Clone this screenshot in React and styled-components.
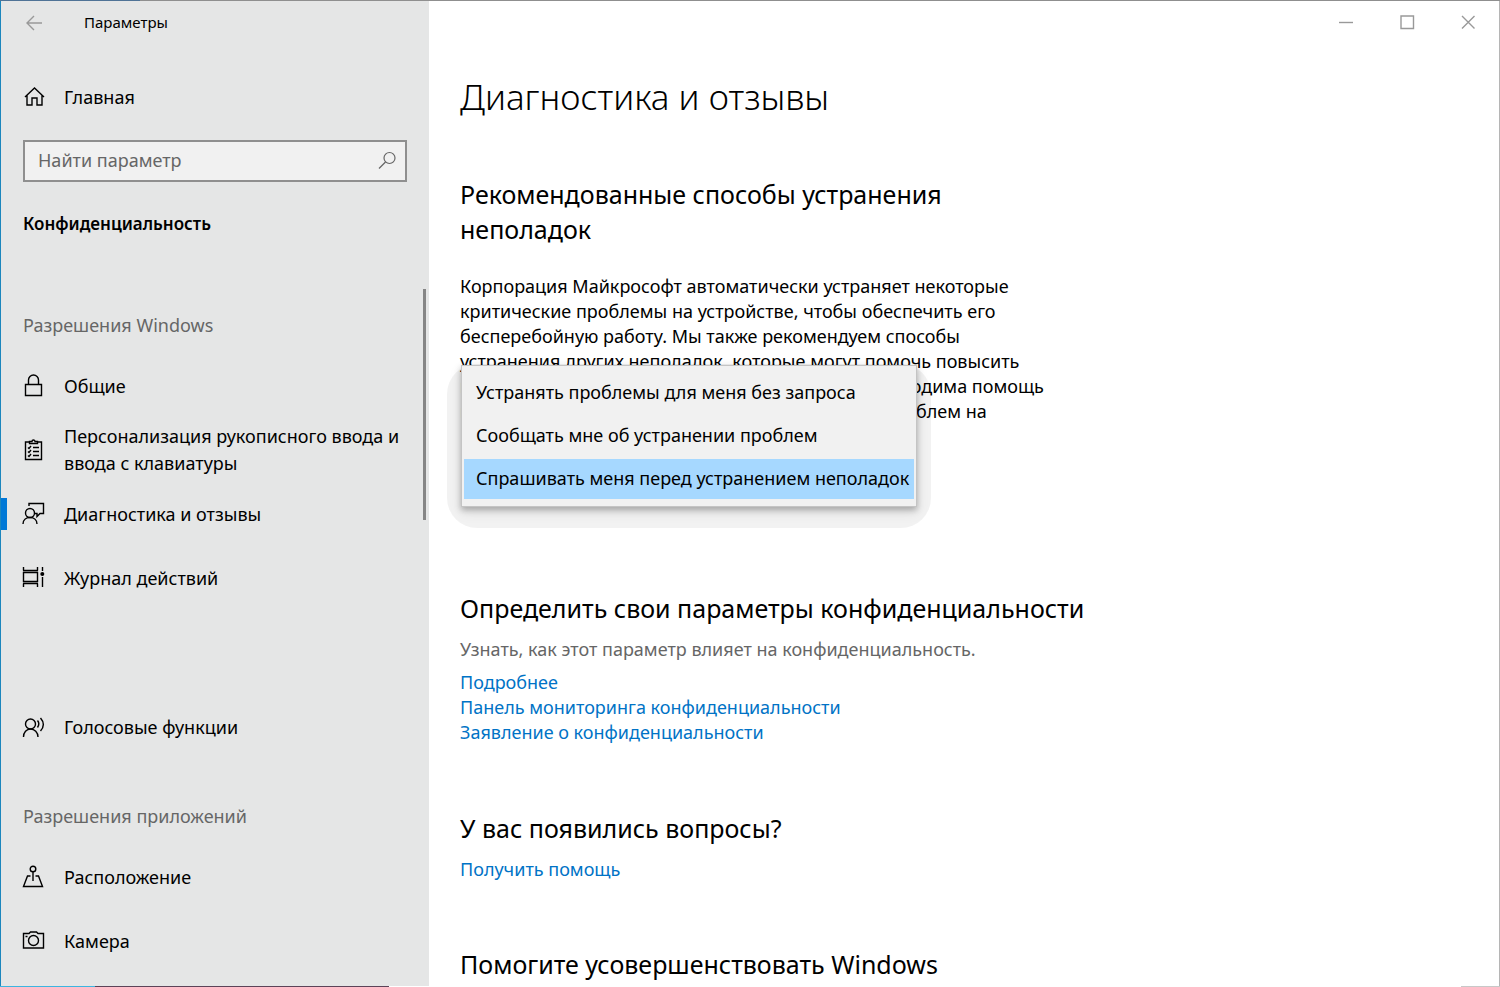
import React from "react";
import styled, { createGlobalStyle } from "styled-components";

const GlobalStyle = createGlobalStyle`
  *, *::before, *::after { box-sizing: border-box; }
  body { margin: 0; background: #fff; }
  body, button, input { font-family: "Noto Sans", "Open Sans", sans-serif; font-size: 18px; line-height: 25px; color: #000; }
  h1, h2, h3, p, ul { margin: 0; padding: 0; }
  ul { list-style: none; }
`;

const Window = styled.div`
  height: 100vh;
  display: grid;
  grid-template-rows: 1px minmax(0, 1fr) 1px;
`;

const TopEdge = styled.div`
  background: linear-gradient(to right, #4f7396 140px, #8f8f8f 140px);
`;

const BottomEdge = styled.div`
  background:
    linear-gradient(to right, #3db5e0 95px, #5c4358 95px, #5c4358 389px, #fff 389px, #fff calc(100% - 39px), #c8c8c8 calc(100% - 39px));
`;

const Body = styled.div`
  display: grid;
  grid-template-columns: 429px minmax(0, 1fr);
  min-height: 0;
`;

const Sidebar = styled.aside`
  position: relative;
  overflow: hidden;
  background: #e5e6e6;
  border-left: 1px solid #1c86bd;
`;

const Caption = styled.div`
  height: 43px;
  display: flex;
  align-items: center;
  gap: 39px;
  padding-left: 22px;
  font-size: 15px;
`;

const PlainButton = styled.button`
  display: grid;
  place-items: center;
  height: 42px;
  width: ${(p) => p.$width}px;
  padding: 0;
  border: 0;
  background: none;
  color: #999;
`;

const NavLink = styled.a`
  position: relative;
  display: flex;
  align-items: center;
  gap: 19px;
  height: 64px;
  padding: 0 20px;
  color: #000;
  line-height: 27px;
  text-decoration: none;
  &::before {
    content: "";
    display: ${(p) => (p.$active ? "block" : "none")};
    position: absolute;
    left: 0;
    top: 16px;
    width: 6px;
    height: 32px;
    background: #0078d7;
  }
  svg { flex: none; }
`;

const HomeLink = styled(NavLink)`
  margin-top: 21px;
`;

const SearchBox = styled.label`
  display: flex;
  align-items: center;
  height: 42px;
  margin: 11px 22px 0;
  padding: 0 8px 2px 13px;
  border: 2px solid #8f8f8f;
  background: #f1f1f1;
  color: #666;
`;

const SearchInput = styled.input.attrs({ type: "text" })`
  flex: 1;
  min-width: 0;
  padding: 0;
  border: 0;
  outline: 0;
  background: none;
  &::placeholder { color: #666; opacity: 1; }
`;

const SectionTitle = styled.h2`
  margin: 29px 22px 59px;
  font-size: 17px;
  font-weight: 600;
  line-height: 25px;
`;

const GroupTitle = styled.h3`
  height: 59px;
  padding-left: 22px;
  font-size: 18px;
  font-weight: 400;
  line-height: 60px;
  color: #666;
`;

const NavList = styled.ul`
  padding-bottom: 27px;
`;

const NavItem = styled.li`
  margin-top: ${(p) => (p.$apart ? 85 : 0)}px;
`;

const ScrollThumb = styled.div`
  position: absolute;
  top: 288px;
  right: 3px;
  width: 3px;
  height: 231px;
  background: #858585;
`;

const Main = styled.main`
  overflow: hidden;
  border-right: 1px solid #b5b5b5;
`;

const WindowControls = styled.div`
  display: flex;
  justify-content: flex-end;
  height: 44px;
  padding-right: 1px;
`;

const Content = styled.div`
  max-width: 760px;
  padding: 28px 31px 0;
`;

const PageTitle = styled.h1`
  font-size: 35px;
  font-weight: 300;
  line-height: 48px;
`;

const Section = styled.section`
  display: flex;
  flex-direction: column;
  align-items: flex-start;
  margin-top: ${(p) => p.$top}px;
`;

const Heading = styled.h2`
  margin-bottom: ${(p) => (p.$loose ? 27 : 11)}px;
  font-size: 25px;
  font-weight: 400;
  line-height: 35px;
`;

const Text = styled.p`
  white-space: pre-line;
`;

const Hint = styled(Text)`
  margin-bottom: 8px;
  color: #666;
`;

const TextLink = styled.a`
  color: #0073c6;
  text-decoration: none;
`;

const Picker = styled.div`
  position: relative;
  isolation: isolate;
  height: 93px;
  width: 456px;
`;

const Menu = styled.div`
  position: absolute;
  left: 1px;
  bottom: 10px;
  width: 456px;
  display: flex;
  flex-direction: column;
  gap: 3px;
  padding: 7px 2px;
  border: 1px solid #c4c4c4;
  background: #f1f1f1;
  box-shadow: 0 3px 6px rgba(0, 0, 0, 0.25), 0 5px 12px rgba(0, 0, 0, 0.1);
  &::before {
    content: "";
    position: absolute;
    z-index: -1;
    inset: -2px -15px -22px;
    border-radius: 30px;
    background: rgba(0, 0, 0, 0.05);
  }
`;

const MenuOption = styled.button`
  height: 40px;
  padding: 0 12px 2px;
  border: 0;
  text-align: left;
  white-space: nowrap;
  background: ${(p) => (p["aria-selected"] ? "#a6d8ff" : "#f1f1f1")};
`;

const Icon = ({ children, size = 24, width = 1.4 }) => (
  <svg width={size} height={size} viewBox={`0 0 ${size} ${size}`} fill="none" stroke="currentColor" strokeWidth={width} aria-hidden="true">
    {children}
  </svg>
);

const icons = {
  home: <path d="m4 12 9.500-9 9.500 9M6 10.500v9.500h5v-7h5v7h5v-9.500" />,
  lock: <path d="M4.500 10.500h16v11h-16zM7.500 10.500V6a5 5 0 0 1 10 0v4.500" />,
  clipboard: (
    <>
      <path d="M9 4H4.500v17.500h16V4H16M8.500 5.500v-2H11a1.500 1.500 0 0 1 3 0h2.500v2zM12 9.500h6M12 13.500h6M12 17.500h6" />
      <path d="m7 9.500 1 1 2-2.500M7 13.500l1 1 2-2.500M7 17.500l1 1 2-2.500" />
    </>
  ),
  feedback: (
    <>
      <circle cx="9" cy="11" r="4.500" />
      <path d="M2 22c0-4 3-6.500 7-6.500s7 2.500 7 6.500M8 4V1.500h14.500v10H19L16 14.500v-3h-2" />
    </>
  ),
  activity: (
    <>
      <path d="M2 4.500h15M2.500 6.500h14v9h-14zM2 17.500h15M2.500 1v3.500M16.500 1v3.500M2.500 17.500V21M16.500 17.500V21M21.500 1v4M21.500 11v10" />
      <circle cx="21.300" cy="8" r="2" fill="currentColor" stroke="none" />
    </>
  ),
  voice: (
    <>
      <circle cx="9.500" cy="9" r="5" />
      <path d="M2.500 22c0-4.500 3-8 7-8s7.500 3.500 7.500 8M16.500 5.500c1.700 2 1.700 4.500 0 7M19.500 3c3.500 4 3.500 9 0 13" />
    </>
  ),
  location: (
    <>
      <circle cx="12" cy="4" r="2.800" />
      <path d="M12 6.800V16M9.500 11H6.500l-4 10.500h19L17.500 11h-3" />
    </>
  ),
  camera: (
    <>
      <path d="M2.500 4.500H8L9.500 3h6L17 4.500h5.500v14.500h-20zM4.500 7.500h2" />
      <circle cx="12.500" cy="11.500" r="5" />
    </>
  ),
};

const windowsPermissions = [
  { label: "Общие", icon: "lock" },
  { label: "Персонализация рукописного ввода и ввода с клавиатуры", icon: "clipboard" },
  { label: "Диагностика и отзывы", icon: "feedback", active: true },
  { label: "Журнал действий", icon: "activity" },
  { label: "Голосовые функции", icon: "voice", apart: true },
];

const appPermissions = [
  { label: "Расположение", icon: "location" },
  { label: "Камера", icon: "camera" },
];

const options = [
  "Устранять проблемы для меня без запроса",
  "Сообщать мне об устранении проблем",
  "Спрашивать меня перед устранением неполадок",
];

const intro = `Корпорация Майкрософт автоматически устраняет некоторые
критические проблемы на устройстве, чтобы обеспечить его
бесперебойную работу. Мы также рекомендуем способы
устранения других неполадок, которые могут помочь повысить
производительность всей системы. Если вам необходима помощь
в устранении других неполадок или каких-либо проблем на`;

const NavGroup = ({ title, items }) => (
  <>
    <GroupTitle>{title}</GroupTitle>
    <NavList>
      {items.map((item) => (
        <NavItem key={item.label} $apart={item.apart}>
          <NavLink href="#" $active={item.active} aria-current={item.active ? "page" : undefined}>
            <Icon>{icons[item.icon]}</Icon>
            {item.label}
          </NavLink>
        </NavItem>
      ))}
    </NavList>
  </>
);

export default function App() {
  return (
    <>
      <GlobalStyle />
      <Window>
        <TopEdge />
        <Body>
          <Sidebar>
            <Caption>
              <PlainButton $width={22} aria-label="Назад">
                <Icon size={20}><path d="M18 10H3M10 3l-7 7 7 7" /></Icon>
              </PlainButton>
              Параметры
            </Caption>
            <HomeLink href="#">
              <Icon>{icons.home}</Icon>
              Главная
            </HomeLink>
            <SearchBox>
              <SearchInput placeholder="Найти параметр" aria-label="Найти параметр" />
              <Icon size={20} width={1.2}>
                <circle cx="12.500" cy="8" r="5.500" />
                <path d="M8.500 12 2 18.500" />
              </Icon>
            </SearchBox>
            <SectionTitle>Конфиденциальность</SectionTitle>
            <nav>
              <NavGroup title="Разрешения Windows" items={windowsPermissions} />
              <NavGroup title="Разрешения приложений" items={appPermissions} />
            </nav>
            <ScrollThumb />
          </Sidebar>
          <Main>
            <WindowControls>
              <PlainButton $width={61} aria-label="Свернуть">
                <Icon size={16}><path d="M1 8.500h14" /></Icon>
              </PlainButton>
              <PlainButton $width={61} aria-label="Развернуть">
                <Icon size={16}><path d="M2 2h12.500v12.500H2z" /></Icon>
              </PlainButton>
              <PlainButton $width={61} aria-label="Закрыть">
                <Icon size={16}><path d="m2 2 12.500 12.500M14.500 2 2 14.500" /></Icon>
              </PlainButton>
            </WindowControls>
            <Content>
              <PageTitle>Диагностика и отзывы</PageTitle>
              <Section $top={56}>
                <Heading $loose>Рекомендованные способы устранения<br />неполадок</Heading>
                <Text>{intro}</Text>
                <Picker>
                  <Menu role="listbox" aria-label="Рекомендованные способы устранения неполадок">
                    {options.map((label, i) => (
                      <MenuOption key={label} role="option" aria-selected={i === 2}>{label}</MenuOption>
                    ))}
                  </Menu>
                </Picker>
              </Section>
              <Section $top={74}>
                <Heading>Определить свои параметры конфиденциальности</Heading>
                <Hint>Узнать, как этот параметр влияет на конфиденциальность.</Hint>
                <TextLink href="#">Подробнее</TextLink>
                <TextLink href="#">Панель мониторинга конфиденциальности</TextLink>
                <TextLink href="#">Заявление о конфиденциальности</TextLink>
              </Section>
              <Section $top={66}>
                <Heading>У вас появились вопросы?</Heading>
                <TextLink href="#">Получить помощь</TextLink>
              </Section>
              <Section $top={65}>
                <Heading>Помогите усовершенствовать Windows</Heading>
              </Section>
            </Content>
          </Main>
        </Body>
        <BottomEdge />
      </Window>
    </>
  );
}
